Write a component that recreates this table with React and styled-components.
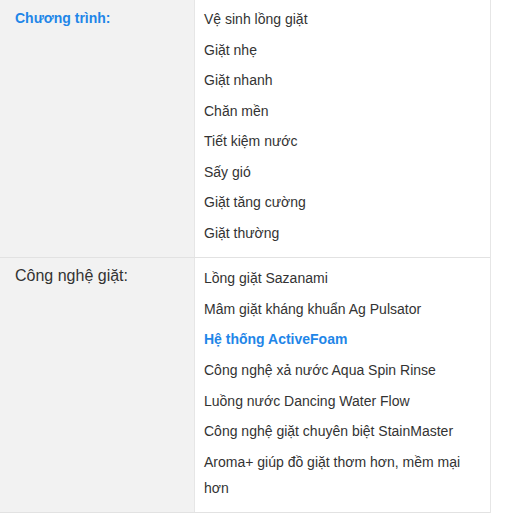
import React from "react";
import styled, { createGlobalStyle } from "styled-components";

const Global = createGlobalStyle`
  html, body { margin: 0; padding: 0; background: #fff; }
  body { font-family: "Liberation Sans", Arial, sans-serif; color: #333; }
`;

const Table = styled.div`
  width: 490px;
  margin-top: -1px;
  border-right: 1px solid #e6e6e6;
`;

const Row = styled.div`
  display: grid;
  grid-template-columns: 195px 1fr;
  border-bottom: 1px solid #e2e2e2;
`;

const Label = styled.div`
  background: #f2f2f2;
  border-right: 1px solid #e6e6e6;
  padding: ${(p) => (p.$first ? "10px" : "9px")} 10px 0 15px;
  font-size: ${(p) => (p.$accent ? "14px" : "16px")};
  font-weight: ${(p) => (p.$accent ? 700 : 400)};
  color: ${(p) => (p.$accent ? "#1f86e8" : "#333")};
  line-height: 18px;
`;

const Values = styled.div`
  padding: 7px 10px 7px 9px;
`;

const Item = styled.p`
  margin: 0 0 4.55px;
  font-size: 14px;
  line-height: 26px;
  color: ${(p) => (p.$accent ? "#1f86e8" : "#333")};
  font-weight: ${(p) => (p.$accent ? 700 : 400)};
`;

const rows = [
  {
    label: "Chương trình:",
    accent: true,
    items: [
      "Vệ sinh lồng giặt",
      "Giặt nhẹ",
      "Giặt nhanh",
      "Chăn mền",
      "Tiết kiệm nước",
      "Sấy gió",
      "Giặt tăng cường",
      "Giặt thường",
    ],
  },
  {
    label: "Công nghệ giặt:",
    items: [
      "Lồng giặt Sazanami",
      "Mâm giặt kháng khuẩn Ag Pulsator",
      { text: "Hệ thống ActiveFoam", accent: true },
      "Công nghệ xả nước Aqua Spin Rinse",
      "Luồng nước Dancing Water Flow",
      "Công nghệ giặt chuyên biệt StainMaster",
      "Aroma+ giúp đồ giặt thơm hơn, mềm mại hơn",
    ],
  },
];

export default function App() {
  return (
    <>
      <Global />
      <Table>
        {rows.map((r, i) => (
          <Row key={i}>
            <Label $accent={r.accent} $first={i === 0}>{r.label}</Label>
            <Values>
              {r.items.map((it, j) =>
                typeof it === "string" ? (
                  <Item key={j}>{it}</Item>
                ) : (
                  <Item key={j} $accent={it.accent}>{it.text}</Item>
                )
              )}
            </Values>
          </Row>
        ))}
      </Table>
    </>
  );
}
